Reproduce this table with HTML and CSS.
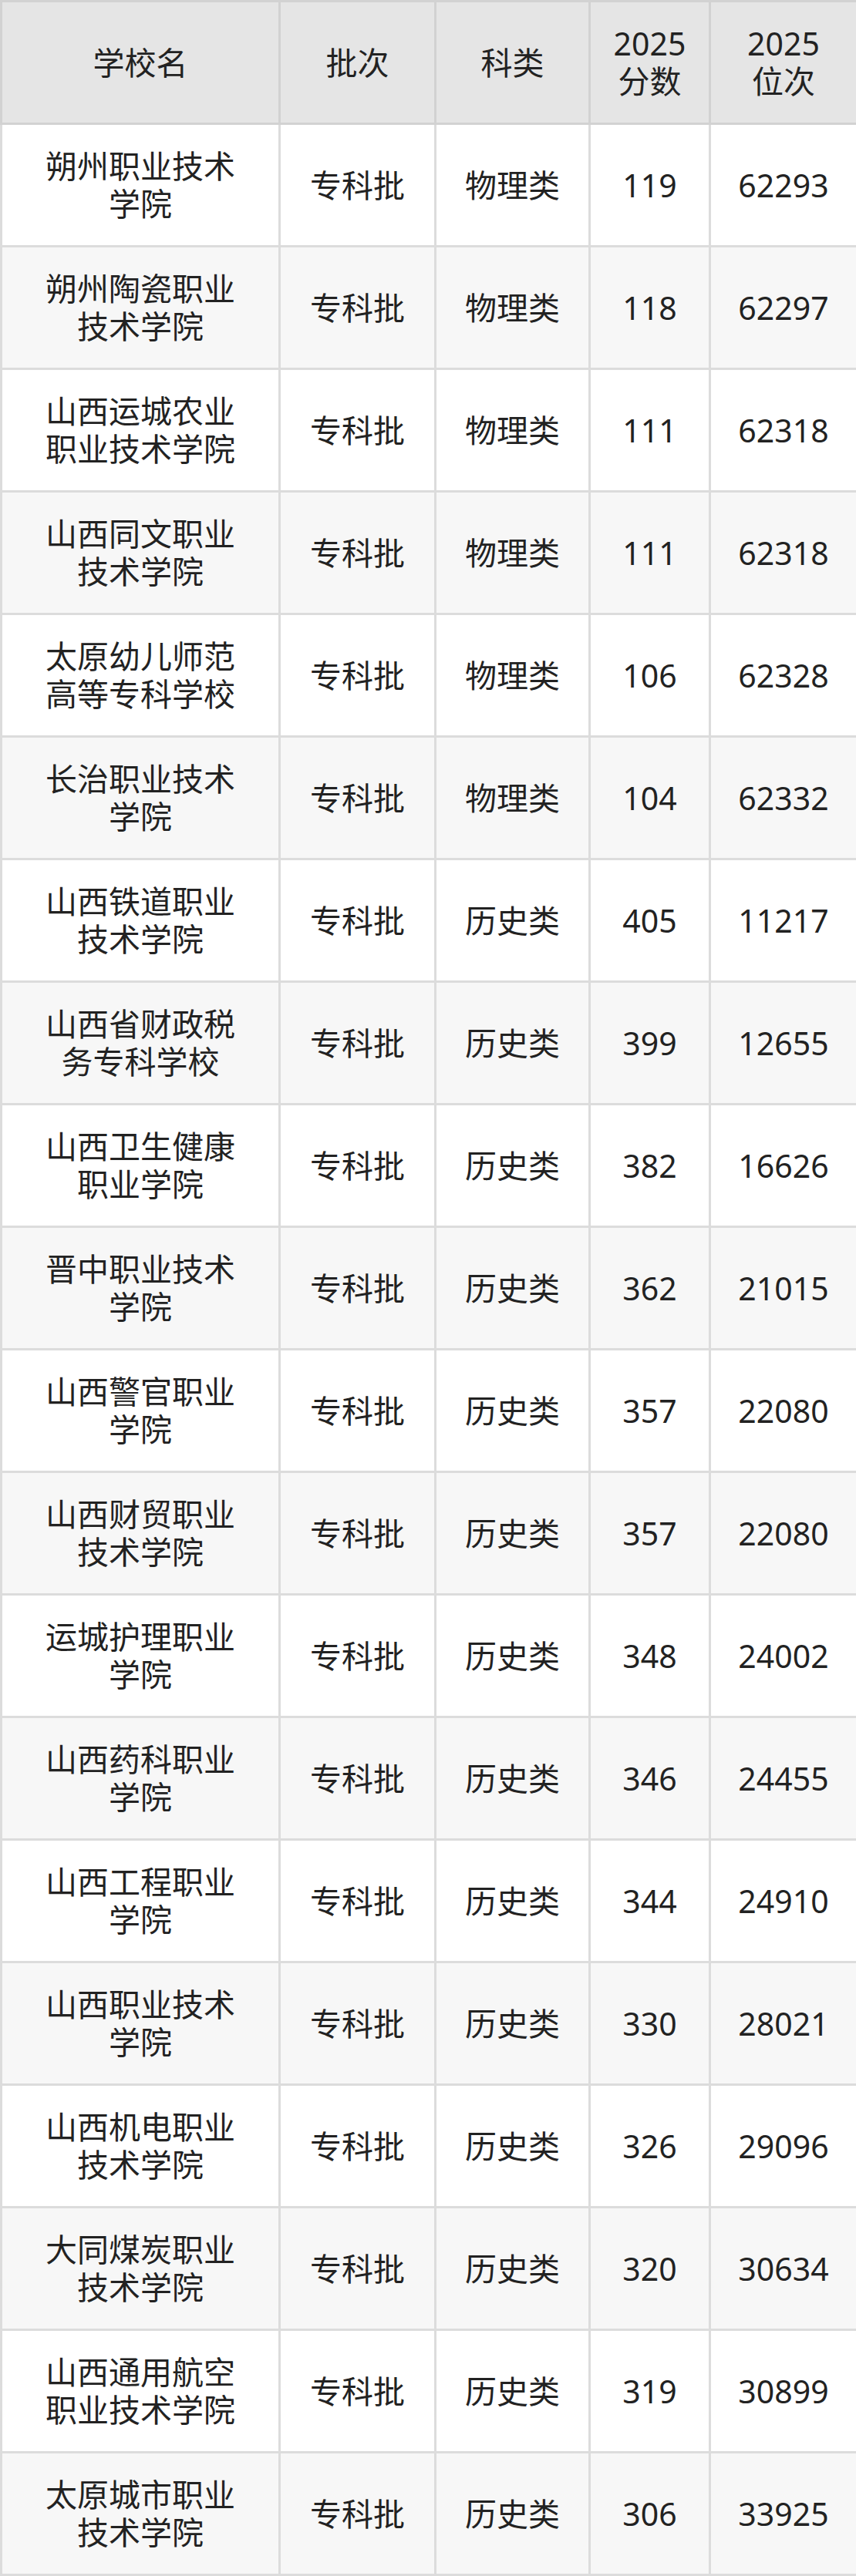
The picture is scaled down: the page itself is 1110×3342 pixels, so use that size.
FILE: index.html
```html
<!DOCTYPE html>
<html lang="zh-CN">
<head>
<meta charset="utf-8">
<title>专科批</title>
<link rel="stylesheet" href="styles.css">
</head>
<body>
<table class="score-table">
  <colgroup>
    <col class="c-name"><col class="c-batch"><col class="c-type"><col class="c-score"><col class="c-rank">
  </colgroup>
  <thead>
    <tr><th class="name">学校名</th><th>批次</th><th>科类</th><th>2025<br>分数</th><th>2025<br>位次</th></tr>
  </thead>
  <tbody>
    <tr><td class="name">朔州职业技术学院</td><td>专科批</td><td>物理类</td><td>119</td><td>62293</td></tr>
    <tr><td class="name">朔州陶瓷职业技术学院</td><td>专科批</td><td>物理类</td><td>118</td><td>62297</td></tr>
    <tr><td class="name">山西运城农业职业技术学院</td><td>专科批</td><td>物理类</td><td>111</td><td>62318</td></tr>
    <tr><td class="name">山西同文职业技术学院</td><td>专科批</td><td>物理类</td><td>111</td><td>62318</td></tr>
    <tr><td class="name">太原幼儿师范高等专科学校</td><td>专科批</td><td>物理类</td><td>106</td><td>62328</td></tr>
    <tr><td class="name">长治职业技术学院</td><td>专科批</td><td>物理类</td><td>104</td><td>62332</td></tr>
    <tr><td class="name">山西铁道职业技术学院</td><td>专科批</td><td>历史类</td><td>405</td><td>11217</td></tr>
    <tr><td class="name">山西省财政税务专科学校</td><td>专科批</td><td>历史类</td><td>399</td><td>12655</td></tr>
    <tr><td class="name">山西卫生健康职业学院</td><td>专科批</td><td>历史类</td><td>382</td><td>16626</td></tr>
    <tr><td class="name">晋中职业技术学院</td><td>专科批</td><td>历史类</td><td>362</td><td>21015</td></tr>
    <tr><td class="name">山西警官职业学院</td><td>专科批</td><td>历史类</td><td>357</td><td>22080</td></tr>
    <tr><td class="name">山西财贸职业技术学院</td><td>专科批</td><td>历史类</td><td>357</td><td>22080</td></tr>
    <tr><td class="name">运城护理职业学院</td><td>专科批</td><td>历史类</td><td>348</td><td>24002</td></tr>
    <tr><td class="name">山西药科职业学院</td><td>专科批</td><td>历史类</td><td>346</td><td>24455</td></tr>
    <tr><td class="name">山西工程职业学院</td><td>专科批</td><td>历史类</td><td>344</td><td>24910</td></tr>
    <tr><td class="name">山西职业技术学院</td><td>专科批</td><td>历史类</td><td>330</td><td>28021</td></tr>
    <tr><td class="name">山西机电职业技术学院</td><td>专科批</td><td>历史类</td><td>326</td><td>29096</td></tr>
    <tr><td class="name">大同煤炭职业技术学院</td><td>专科批</td><td>历史类</td><td>320</td><td>30634</td></tr>
    <tr><td class="name">山西通用航空职业技术学院</td><td>专科批</td><td>历史类</td><td>319</td><td>30899</td></tr>
    <tr><td class="name">太原城市职业技术学院</td><td>专科批</td><td>历史类</td><td>306</td><td>33925</td></tr>
  </tbody>
</table>
</body>
</html>
```
FILE: styles.css
```css
html, body {
  margin: 0;
  padding: 0;
  background: #ffffff;
}

.score-table {
  width: 1110px;
  border-collapse: collapse;
  table-layout: fixed;
  font-family: "Noto Sans", "Noto Sans CJK SC", sans-serif;
  font-size: 41px;
  line-height: 49px;
  color: #222222;
  border: 3px solid #d6d6d6;
}

.c-name { width: 361px; }
.c-batch { width: 202px; }
.c-type { width: 200px; }
.c-score { width: 156px; }
.c-rank { width: 191px; }

.score-table th,
.score-table td {
  height: 156px;
  padding: 0 8px;
  text-align: center;
  vertical-align: middle;
  font-weight: 400;
  border: 3px solid #dcdcdc;
}

.score-table th {
  background: #e5e5e5;
  border-color: #d2d2d2;
}

.score-table .name {
  padding: 0 44px;
}

.score-table tbody tr:nth-child(odd) td {
  background: #ffffff;
}

.score-table tbody tr:nth-child(even) td {
  background: #f7f7f7;
}
```
